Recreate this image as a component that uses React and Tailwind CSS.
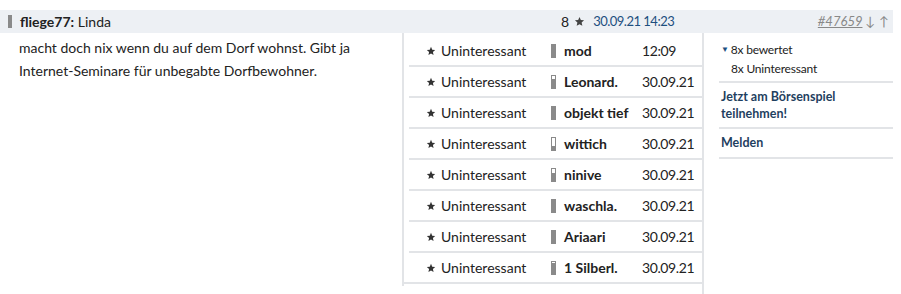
import React from "react";

const rows = [
  { name: "mod", date: "12:09", fill: 1 },
  { name: "Leonard.", date: "30.09.21", fill: 0.7 },
  { name: "objekt tief", date: "30.09.21", fill: 1 },
  { name: "wittich", date: "30.09.21", fill: 0.3 },
  { name: "ninive", date: "30.09.21", fill: 0.65 },
  { name: "waschla.", date: "30.09.21", fill: 1 },
  { name: "Ariaari", date: "30.09.21", fill: 1 },
  { name: "1 Silberl.", date: "30.09.21", fill: 0.85 },
];

function Bar({ fill }) {
  return (
    <div className="w-[5px] h-[14px] border border-[#8a8a8a] bg-white flex flex-col justify-end">
      <div className="w-full bg-[#8a8a8a]" style={{ height: `${fill * 100}%` }} />
    </div>
  );
}

function Star({ className }) {
  return (
    <svg viewBox="0 0 24 24" className={className} fill="currentColor">
      <path d="M12 2l2.9 6.9 7.1.6-5.4 4.7 1.6 7.3L12 17.8 5.8 21.5l1.6-7.3L2 9.5l7.1-.6z" />
    </svg>
  );
}

export default function App() {
  return (
    <div className="w-[901px] h-[294px] bg-white text-[#222] text-[14px] overflow-hidden" style={{ fontFamily: "Lato, 'Noto Sans', sans-serif" }}>
      <div className="mt-[10px] w-[893px] h-[23px] bg-[#edf0f4] flex items-center">
        <div className="ml-[8px] w-[4px] h-[13px] bg-[#8a8a8a]" />
        <div className="ml-[8px] w-[541px]">
          <span className="font-bold">fliege77:</span> Linda
        </div>
        <div className="flex items-center">
          <span>8</span>
          <Star className="ml-[5px] w-[11px] h-[11px] text-[#444]" />
          <span className="ml-[8px] text-[#1d4f7f] text-[13px] tracking-[-0.5px]">30.09.21 14:23</span>
        </div>
        <div className="ml-auto mr-[4px] flex items-center text-[#888] text-[13px]">
          <span className="italic underline">#47659</span>
          <span className="ml-[3px]">↓</span>
          <span className="ml-[4px]">↑</span>
        </div>
      </div>
      <div className="flex h-[261px]">
        <div className="w-[402px] pl-[19px] pt-[3px] leading-[23px]">
          macht doch nix wenn du auf dem Dorf wohnst. Gibt ja Internet-Seminare für unbegabte Dorfbewohner.
        </div>
        <div className="w-[300px] h-[253px] border-l-2 border-[#e2e4e7] flex flex-col pt-[3px]">
          {rows.map((r, i) => (
            <div key={i} className={`h-[31px] shrink-0 flex items-center border-b-2 border-[#e2e4e7] ${i === rows.length - 1 ? "" : "ml-[5px]"}`}>
              <div className={`flex items-center ${i === rows.length - 1 ? "pl-[22px]" : "pl-[17px]"}`}>
                <Star className="w-[10px] h-[10px] text-[#333]" />
                <span className="ml-[5px] w-[110px]">Uninteressant</span>
                <Bar fill={r.fill} />
                <span className="ml-[8px] w-[78px] font-bold whitespace-nowrap">{r.name}</span>
                <span className="tracking-[-0.4px]">{r.date}</span>
              </div>
            </div>
          ))}
        </div>
        <div className="w-[191px] border-l-2 border-[#e2e4e7] pl-[15px] text-[12px]">
          <div className="border-b-2 border-[#e2e4e7] pt-[7px] pb-[3px] leading-[19px] tracking-[-0.2px]">
            <div className="flex items-center pl-[2px]">
              <span className="text-[#1d4f7f] text-[8px] mr-[2px]">▼</span>8x bewertet
            </div>
            <div className="pl-[12px]">8x Uninteressant</div>
          </div>
          <div className="border-b-2 border-[#e2e4e7] pt-[5px] pb-[5px] pl-[2px] leading-[17px] font-bold text-[12.5px] text-[#1f3f5f]">
            Jetzt am Börsenspiel<br />teilnehmen!
          </div>
          <div className="border-b-2 border-[#e2e4e7] pt-[5px] pb-[6px] pl-[2px] leading-[17px] font-bold text-[12.5px] text-[#1f3f5f]">
            Melden
          </div>
        </div>
      </div>
    </div>
  );
}
